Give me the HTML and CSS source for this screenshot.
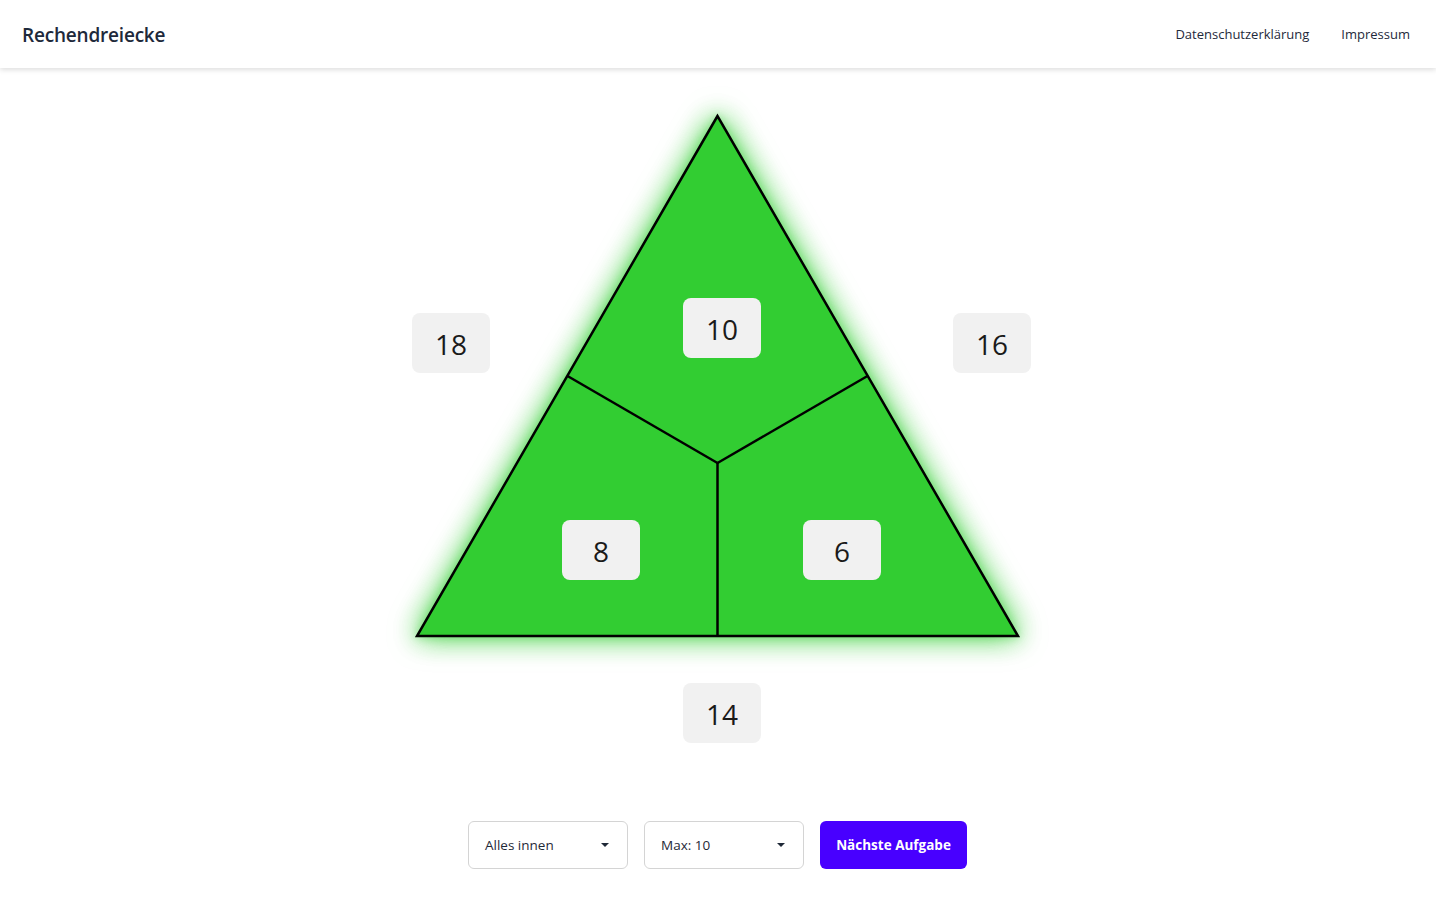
FILE: index.html
```html
<!DOCTYPE html>
<html lang="de">
<head>
<meta charset="utf-8">
<title>Rechendreiecke</title>
<link rel="stylesheet" href="styles.css">
</head>
<body>
<header class="topbar">
  <div class="brand">Rechendreiecke</div>
  <nav class="nav">
    <a href="#">Datenschutzerklärung</a>
    <a href="#">Impressum</a>
  </nav>
</header>
<main class="main">
  <div class="diagram">
    <svg class="tri" width="640" height="700" viewBox="0 0 640 700">
      <polygon points="319.5,48 19,568 620,568" fill="#32cd32" stroke="#000" stroke-width="2.5" stroke-linejoin="miter"/>
      <line x1="169.5" y1="308" x2="319.5" y2="395" stroke="#000" stroke-width="2.5"/>
      <line x1="469.5" y1="308" x2="319.5" y2="395" stroke="#000" stroke-width="2.5"/>
      <line x1="319.5" y1="395" x2="319.5" y2="568" stroke="#000" stroke-width="2.5"/>
    </svg>
    <div class="num n-top">10</div>
    <div class="num n-left">18</div>
    <div class="num n-right">16</div>
    <div class="num n-bl">8</div>
    <div class="num n-br">6</div>
    <div class="num n-bottom">14</div>
  </div>
  <div class="controls">
    <div class="select"><span>Alles innen</span><span class="caret"></span></div>
    <div class="select"><span>Max: 10</span><span class="caret"></span></div>
    <button class="btn">Nächste Aufgabe</button>
  </div>
</main>
</body>
</html>
```
FILE: styles.css
```css
* { box-sizing: border-box; }
html, body { margin: 0; padding: 0; background: #fff; }
body {
  font-family: "Open Sans", "Noto Sans", "Liberation Sans", sans-serif;
  color: #1f2937;
}
.topbar {
  height: 68px;
  display: flex;
  align-items: center;
  justify-content: space-between;
  padding: 2px 26px 0 22px;
  background: #fff;
  box-shadow: 0 2px 5px rgba(0,0,0,0.13);
  position: relative;
  z-index: 2;
}
.brand {
  font-size: 19px;
  font-weight: 600;
  color: #1e293b;
  letter-spacing: -0.2px;
}
.nav { display: flex; gap: 32px; margin-top: -2px; }
.nav a {
  font-size: 13px;
  color: #1e293b;
  text-decoration: none;
}
.main {
  display: flex;
  flex-direction: column;
  align-items: center;
}
.diagram {
  position: relative;
  width: 640px;
  height: 700px;
  margin-left: 0;
}
.tri {
  display: block;
  filter: drop-shadow(0 0 14px rgba(50,205,50,0.75)) drop-shadow(0 0 5px rgba(50,205,50,0.5));
  overflow: visible;
}
.num {
  position: absolute;
  width: 78px;
  height: 60px;
  border-radius: 8px;
  background: #f1f1f1;
  display: flex;
  align-items: center;
  justify-content: center;
  font-size: 28px;
  color: #1a1a1a;
  padding-top: 2px;
}
.n-top { left: 285px; top: 230px; }
.n-left { left: 14px; top: 245px; }
.n-right { left: 555px; top: 245px; }
.n-bl { left: 164px; top: 452px; }
.n-br { left: 405px; top: 452px; }
.n-bottom { left: 285px; top: 615px; }
.controls {
  display: flex;
  gap: 16px;
  margin-top: 53px;
  margin-left: -1px;
}
.select {
  width: 160px;
  height: 48px;
  border: 1px solid #d4d4d4;
  border-radius: 6px;
  display: flex;
  align-items: center;
  justify-content: space-between;
  padding: 0 18px 0 16px;
  font-size: 13.5px;
  color: #1f2937;
}
.caret {
  width: 0;
  height: 0;
  border-left: 4px solid transparent;
  border-right: 4px solid transparent;
  border-top: 4px solid #1f2937;
}
.btn {
  width: 147px;
  height: 48px;
  border: none;
  border-radius: 6px;
  background: #4800ff;
  color: #fff;
  font-family: inherit;
  font-size: 13.5px;
  font-weight: 700;
  padding: 0;
}
```
